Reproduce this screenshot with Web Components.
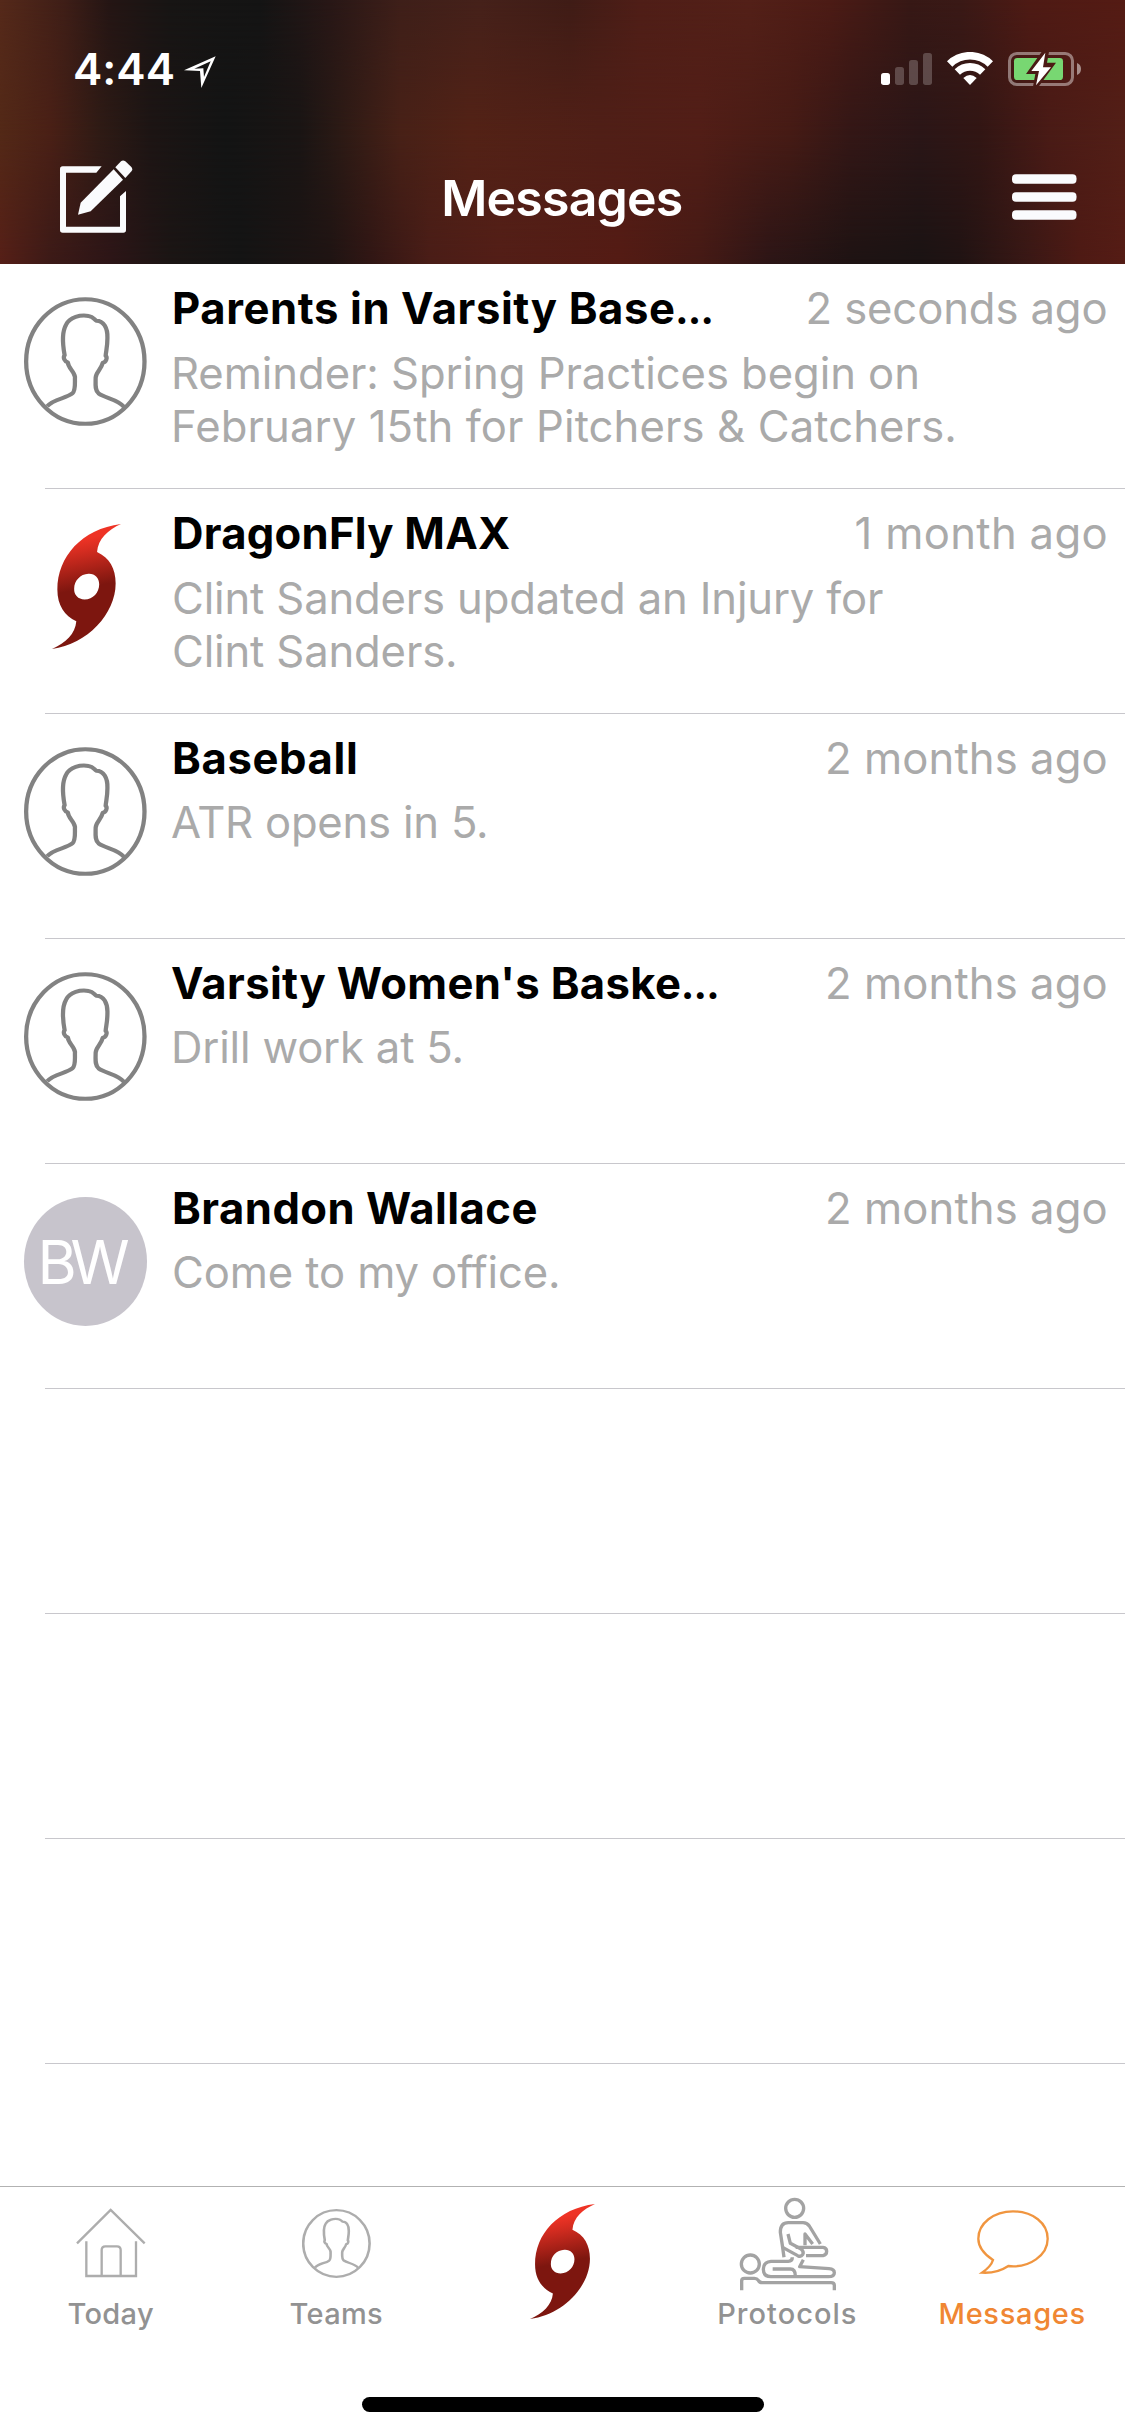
<!DOCTYPE html>
<html lang="en">
<head>
<meta charset="utf-8">
<title>Messages</title>
<style>
html,body{margin:0;padding:0;background:#fff}
body{width:1125px;height:2436px;overflow:hidden;font-family:Inter,"Liberation Sans",sans-serif}
fit-text b{font-size:34px;font-weight:900;letter-spacing:0;line-height:0}
.pull{margin-left:-2px}
</style>
</head>
<body>
<phone-screen>
  <nav-header slot="header" time="4:44" heading="Messages"></nav-header>
  <message-row>
    <person-icon slot="avatar"></person-icon>
    <fit-text slot="title" ink="500">Parents in Varsity Base<b>…</b></fit-text>
    <fit-text slot="time" ink="297">2 seconds ago</fit-text>
    <fit-text slot="body" ink="743.2">Reminder: Spring Practices begin on</fit-text>
    <fit-text slot="body" ink="780.3">February 15th for Pitchers &amp; Catchers.</fit-text>
  </message-row>
  <message-row>
    <storm-logo slot="avatar"></storm-logo>
    <fit-text slot="title" ink="336">DragonFly MAX</fit-text>
    <fit-text slot="time" ink="249">1 month ago</fit-text>
    <fit-text slot="body" ink="709">Clint Sanders updated an Injury for</fit-text>
    <fit-text slot="body" ink="281">Clint Sanders.</fit-text>
  </message-row>
  <message-row single>
    <person-icon slot="avatar"></person-icon>
    <fit-text slot="title" ink="182">Baseball</fit-text>
    <fit-text slot="time" ink="277.5">2 months ago</fit-text>
    <fit-text slot="body" class="pull" ink="314">ATR opens in 5.</fit-text>
  </message-row>
  <message-row single>
    <person-icon slot="avatar"></person-icon>
    <fit-text slot="title" class="pull" ink="508">Varsity Women's Baske<b>…</b></fit-text>
    <fit-text slot="time" ink="277.5">2 months ago</fit-text>
    <fit-text slot="body" ink="287.5">Drill work at 5.</fit-text>
  </message-row>
  <message-row single>
    <initials-badge slot="avatar">BW</initials-badge>
    <fit-text slot="title" ink="362.5">Brandon Wallace</fit-text>
    <fit-text slot="time" ink="277.5">2 months ago</fit-text>
    <fit-text slot="body" ink="384">Come to my office.</fit-text>
  </message-row>
  <message-row></message-row>
  <message-row></message-row>
  <message-row></message-row>
  <tab-bar slot="footer">
    <tab-item class="left" ink="85.4">Today<home-icon slot="icon"></home-icon></tab-item>
    <tab-item class="left" ink="91.6">Teams<person-icon slot="icon" class="small"></person-icon></tab-item>
    <tab-item class="logo"><storm-logo slot="icon" class="tab"></storm-logo></tab-item>
    <tab-item ink="136.5">Protocols<care-icon slot="icon"></care-icon></tab-item>
    <tab-item ink="144" active>Messages<bubble-icon slot="icon"></bubble-icon></tab-item>
  </tab-bar>
</phone-screen>

<script>
const define = (name, html, extra) => {
  const tpl = document.createElement('template');
  tpl.innerHTML = html;
  customElements.define(name, class extends HTMLElement {
    connectedCallback() {
      if (this.shadowRoot) return;
      this.attachShadow({ mode: 'open' }).append(tpl.content.cloneNode(true));
      if (extra) extra(this, this.shadowRoot);
    }
  });
};

define('phone-screen', `<style>
:host{display:flex;flex-direction:column;width:1125px;height:2436px;background:#fff;overflow:hidden}
main{flex:1;display:flex;flex-direction:column;min-height:0;overflow:hidden}
</style><slot name="header"></slot><main><slot></slot></main><slot name="footer"></slot>`);

/* Header: status row above the navigation row */
define('nav-header', `<style>
:host{height:264px;flex:none;color:#fff;display:grid}
.bg,.ui{grid-area:1/1}
.bg{isolation:isolate;z-index:0;display:grid;background:linear-gradient(90deg,#532917 0,#4a2016 50px,#2f1b15 100px,#1d1514 150px,#131414 225px,#1a1514 300px,#2c1a15 340px,#482117 400px,#532216 470px,#501f17 600px,#521e17 700px,#461b15 790px,#341716 850px,#2b1617 920px,#321614 980px,#4a1b16 1050px,#531f17 1125px)}
.bg i{grid-area:1/1}
.t{background:linear-gradient(90deg,#55291a 0,#3e1e17 65px,#241514 110px,#171514 170px,#141414 260px,#281716 330px,#3e1f19 400px,#45211a 480px,#3f1c16 570px,#4f1e17 640px,#532018 750px,#4c1b15 830px,#371815 910px,#3a1916 960px,#4e1a14 1030px,#541b14 1125px);-webkit-mask-image:linear-gradient(#000,transparent 50%);mask-image:linear-gradient(#000,transparent 50%)}
.b{background:linear-gradient(90deg,#561f17 0,#3c1a17 50px,#2d1517 110px,#1b1514 170px,#141414 240px,#1f1413 330px,#301614 370px,#4a1d17 430px,#531e17 500px,#541b14 620px,#451a15 700px,#2c1516 770px,#1e1313 850px,#1a1313 920px,#201313 960px,#3a1815 1030px,#4e1a14 1080px,#551c15 1125px);-webkit-mask-image:linear-gradient(transparent 50%,#000);mask-image:linear-gradient(transparent 50%,#000)}
.ui{z-index:1;display:flex;flex-direction:column}
.status{display:flex;align-items:flex-start;height:132px;box-sizing:border-box;padding:52px 44px 0 75px}
.time{font-size:44px;font-weight:600;line-height:34px}
.loc{margin:4px 0 0 10px}
.sys{margin-left:auto}
.nav{display:grid;grid-template-columns:1fr auto 1fr;align-items:start;padding:28px 59px 0 60px}
.title{font-size:50px;font-weight:600;line-height:50px;margin-top:13px}
.menu{justify-self:end;margin:13.500px -11px 0 0}
svg{display:block}
</style>
<div class="bg"><i class="t"></i><i class="b"></i></div>
<div class="ui">
<div class="status"><fit-text class="time" ink="98.7"></fit-text>
<svg class="loc" width="32" height="32" viewBox="553 108 96 96"><path fill="#fff" fill-rule="evenodd" d="M553 151L648 109L605 204L601 153ZM584 146L611 145L613 171L633 124Z"/></svg>
<svg class="sys" width="200" height="34" viewBox="63 96 600 102">
<defs><mask id="m"><rect x="440" y="90" width="230" height="115" fill="#fff"/><path fill="#000" d="M549 90L498 162H526L518 205H532L588 128H561L568 90Z"/></mask></defs>
<rect x="63" y="159" width="27" height="36" rx="8" fill="#fff"/>
<g fill="#fff" fill-opacity=".22"><rect x="105" y="141" width="27" height="54" rx="8"/><rect x="147" y="120" width="27" height="75" rx="8"/><rect x="189" y="99" width="27" height="96" rx="8"/></g>
<g fill="none" stroke="#fff" stroke-width="23"><path d="M269 132A87.500 87.500 0 0 1 391 132"/><path d="M292 156A55 55 0 0 1 368 156"/></g>
<path fill="#fff" d="M310 174Q330 156 350 174L330 195Z"/>
<g mask="url(#m)"><rect x="448.500" y="100.500" width="189" height="93" rx="22" fill="none" stroke="#fff" stroke-opacity=".42" stroke-width="9"/><rect x="462" y="114" width="147" height="66" rx="10" fill="#78d772"/></g>
<path d="M651 129Q663 134 663 147T651 165Z" fill="#fff" fill-opacity=".5"/>
<path fill="#fff" d="M556 98L514 153H537L528 196L573 142H549Z"/></svg></div>
<div class="nav">
<svg width="73" height="73" viewBox="180 421 219 219"><g fill="#fafbfd"><path d="M188 440H305L289 459H198V621H360V530L378 514V631Q378 639 370 639H188Q180 639 180 631V448Q180 440 188 440Z"/><path d="M234 585L242 549L341 449L369 480L272 575Z"/><path d="M346 443L363 425Q369 420 376 425L394 442Q399 448 395 454L376 475Z"/></g></svg>
<fit-text class="title" ink="237.5"></fit-text>
<svg class="menu" width="65" height="46" viewBox="0 0 65 46" fill="#fafbfd"><rect y=".3" width="64.500" height="9.400" rx="4"/><rect y="18.300" width="64.500" height="9.400" rx="4"/><rect y="36.300" width="64.500" height="9.400" rx="4"/></svg>
</div></div>`, (host, root) => {
  root.querySelector('.time').textContent = host.getAttribute('time');
  root.querySelector('.title').textContent = host.getAttribute('heading');
});

/* List row with avatar, title line and up to two lines of body */
define('message-row', `<style>
:host{display:flex;flex-direction:column;height:225px;flex:none}
.row{flex:1;display:flex;min-height:0}
.avatar{width:150px;padding-left:24px;flex:none;display:flex;align-items:flex-start;padding-top:33px;box-sizing:content-box}
.content{flex:1;padding:20px 19.500px 0 0;min-width:0;font-size:43.600px}
.head{display:flex;justify-content:space-between;height:50px;line-height:50px}
.title{font-weight:700;color:#000}
.time{color:#aaa}
.body{margin-top:13px;line-height:53px;color:#aaa}
:host([single]) .body{margin-top:12px}
.line{height:1px;margin-left:45px;background:#c8c7cc}
</style>
<div class="row"><div class="avatar"><slot name="avatar"></slot></div>
<div class="content"><div class="head"><div class="title"><slot name="title"></slot></div><div class="time"><slot name="time"></slot></div></div><div class="body"><slot name="body"></slot></div></div></div>
<div class="line"></div>`);

define('initials-badge', `<style>
:host{display:flex;width:123px;height:129px;border-radius:50%;background:#c7c4cc;color:#fff;align-items:center;justify-content:center;font-size:60px;line-height:60px}
fit-text{margin-top:1px}
</style><fit-text ink="85.800"></fit-text>`, (host, root) => {
  root.querySelector('fit-text').textContent = host.textContent;
});

define('person-icon', `<style>
:host{display:block;width:123px;height:129px;--c:#828282;--w:12}
:host(.small){width:69px;height:69px;margin-top:21.500px;--c:#adadad;--w:13}
svg{display:block;width:100%;height:100%}
</style><svg viewBox="67 110 345 387" preserveAspectRatio="none"><g fill="none" style="stroke:var(--c);stroke-width:var(--w)" stroke-linejoin="round"><ellipse cx="239" cy="303.500" rx="166" ry="187"/><path d="M132 438C150 415 185 415 203 399C213 389 209 365 210 350C208 332 191 324 190 306C180 303 176 291 181 285C175 250 174 213 185 193C196 170 225 163 248 167C262 169 264 178 270 181C290 181 302 203 301 233C301 260 297 272 296 287C302 291 297 306 288 307C284 327 269 335 268 352C268 370 265 389 276 399C295 414 330 416 348 440"/></g></svg>`);

define('storm-logo', `<style>
:host{display:block;width:69px;height:125px;margin:2px 0 0 27.500px}
:host(.tab){width:65px;height:115px;margin:0}
svg{display:block;width:100%;height:100%}
</style><svg viewBox="145 102 193 374" preserveAspectRatio="none"><defs><linearGradient id="g" gradientUnits="userSpaceOnUse" x1="215" y1="150" x2="246" y2="292"><stop offset="0" stop-color="#ee3325"/><stop offset=".25" stop-color="#d42c20"/><stop offset="1" stop-color="#7d160f"/></linearGradient></defs><path fill="url(#g)" fill-rule="evenodd" d="M338 102C302 120 274 145 271 186C306 203 323 236 323 280C323 370 244 462 145 476C184 458 210 430 213 393C180 376 160 346 160 298C160 200 228 117 338 102ZM247 251C265 250 277 263 277 282C277 306 260 328 236 328C218 328 206 314 207 296C207 272 224 252 247 251Z"/></svg>`);

define('tab-bar', `<style>
:host{display:flex;flex-direction:column;height:250px;flex:none;background:#fff;box-sizing:border-box;border-top:1px solid #b2b2b2}
.tabs{display:flex;height:210px}
.home{width:402px;height:15px;border-radius:8px;background:#000;margin:0 auto}
</style><div class="tabs"><slot></slot></div><div class="home"></div>`);

define('tab-item', `<style>
:host{flex:none;width:225px;display:flex;flex-direction:column;align-items:center;color:#929292;font-size:29px;font-weight:500;line-height:36px;box-sizing:border-box}
:host(.left){padding-right:2.500px}
:host([active]){color:#f08733}
.icon{height:108.500px;display:flex;align-items:flex-start;flex:none}
:host(.logo) .icon{padding-top:17px}
</style><div class="icon"><slot name="icon"></slot></div><fit-text></fit-text>`, (host, root) => {
  const label = root.querySelector('fit-text');
  if (!host.hasAttribute('ink')) { label.remove(); return; }
  label.textContent = host.firstChild.textContent.trim();
  label.setAttribute('ink', host.getAttribute('ink'));
});

define('home-icon', `<style>:host{display:block;margin-top:21px}svg{display:block}</style>
<svg width="70" height="70" viewBox="230 115 210 210" fill="none" stroke="#adadad" stroke-width="7"><path d="M233 221L334 121L436 221M261 215V319H410V215M307 319V241Q307 230 318 230H353Q364 230 364 241V319"/></svg>`);

define('bubble-icon', `<style>:host{display:block;margin-top:22px}svg{display:block}</style>
<svg width="72" height="66" viewBox="287 120 216 198" fill="none" stroke="#f0953f" stroke-width="7"><path d="M335 273C305 253 291 235 291 209C291 163 337 127 395 127C455 127 499 163 499 209C499 258 445 298 381 291C360 305 335 313 302 311C318 300 330 290 335 273Z"/></svg>`);

define('care-icon', `<style>:host{display:block;margin-top:10px}svg{display:block}</style>
<svg width="98" height="94" viewBox="774 81 294 282" fill="none" stroke="#a3a3a3" stroke-width="10" stroke-linejoin="round">
<circle cx="941" cy="115" r="27"/><circle cx="808" cy="282" r="27"/>
<path d="M782 361V332Q782 325 790 325H820Q828 325 832 331Q836 338 844 338H1050Q1060 338 1060 346V361"/>
<path d="M909 262L904 226L898 187Q898 158 922 158H966Q978 158 985 168L1018 222"/>
<path d="M921 192L928 220L960 237Q970 245 965 254Q960 262 950 257L905 232"/>
<path d="M944 232H1026Q1037 233 1037 244T1026 257H975"/>
<path d="M972 226V192L995 222"/>
<path d="M934 262Q934 274 922 274H870Q847 276 847 298T870 320H1042Q1060 320 1060 308Q1060 297 1044 296L956 290L967 269"/>
<path d="M875 297H928Q943 297 943 318"/></svg>`);

/* A line of text whose box is its ink; tracking is adjusted to reach the given ink width.
   A trailing <b> (the ellipsis) hangs outside the measured part. */
const pen = document.createElement('canvas').getContext('2d');
customElements.define('fit-text', class extends HTMLElement {
  connectedCallback() {
    if (!this.shadowRoot) {
      this.attachShadow({ mode: 'open' }).innerHTML =
        '<style>:host{display:block;white-space:nowrap}span{display:inline-block}</style><span><slot></slot></span>';
    }
    this.fit();
    requestAnimationFrame(() => this.fit());
  }
  fit() {
    const text = this.firstChild ? this.firstChild.textContent : '';
    const ink = parseFloat(this.getAttribute('ink'));
    if (!text || !ink) return;
    const cs = getComputedStyle(this);
    pen.font = `${cs.fontWeight} ${cs.fontSize} ${cs.fontFamily}`;
    const m = pen.measureText(text);
    const natural = m.actualBoundingBoxLeft + m.actualBoundingBoxRight;
    this.style.width = ink + 'px';
    const span = this.shadowRoot.querySelector('span');
    span.style.letterSpacing = (ink - natural) / ([...text].length - 1) + 'px';
    span.style.marginLeft = m.actualBoundingBoxLeft + 'px';
  }
});
</script>
</body>
</html>
